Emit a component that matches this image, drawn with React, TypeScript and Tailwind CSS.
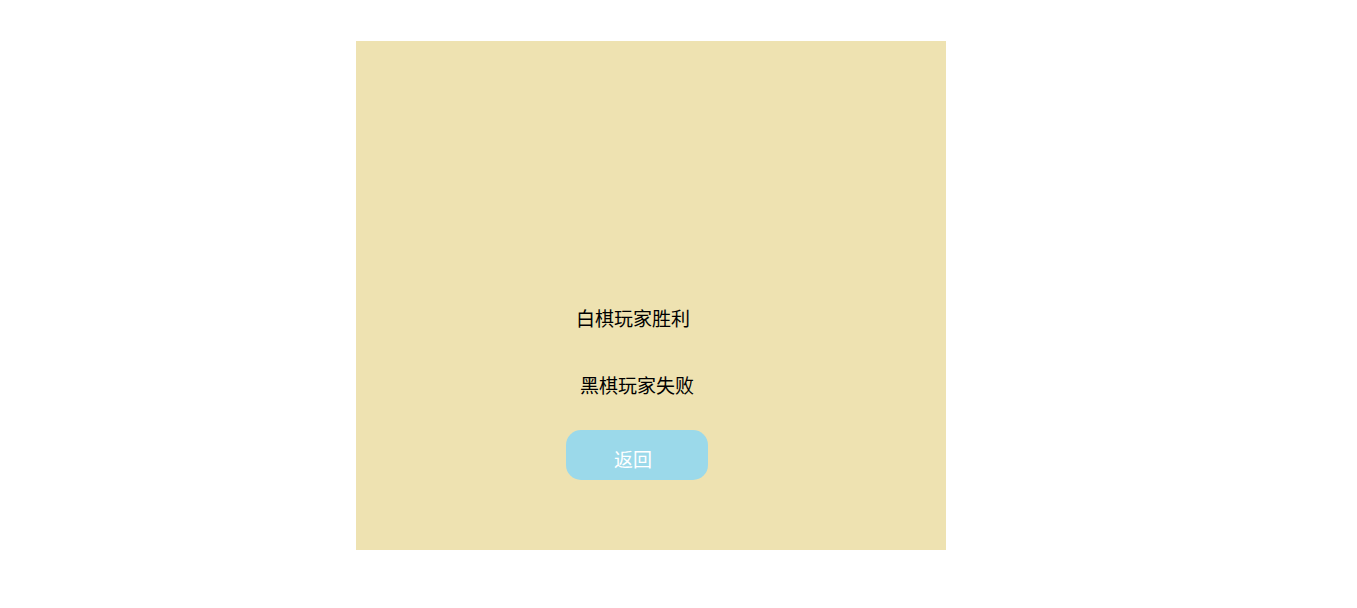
export default function App() {
  return (
    <div className="min-h-[608px] w-full bg-white pt-[41px] pl-[356px] font-['Noto_Sans_CJK_SC','Microsoft_YaHei',sans-serif]">
      <div className="flex h-[509px] w-[590px] flex-col items-start bg-[#eee2b1] pt-[265px]">
        <p className="ml-[220px] text-[19px] leading-[24px] text-black">白棋玩家胜利</p>
        <p className="ml-[224px] mt-[43px] text-[19px] leading-[24px] text-black">黑棋玩家失败</p>
        <button className="ml-[210px] mt-[33px] flex h-[50px] w-[142px] items-center justify-center rounded-[15px] bg-[#9bd9ea] pt-[8px] pr-[8px] text-[19px] leading-[24px] text-white">
          返回
        </button>
      </div>
    </div>
  );
}
